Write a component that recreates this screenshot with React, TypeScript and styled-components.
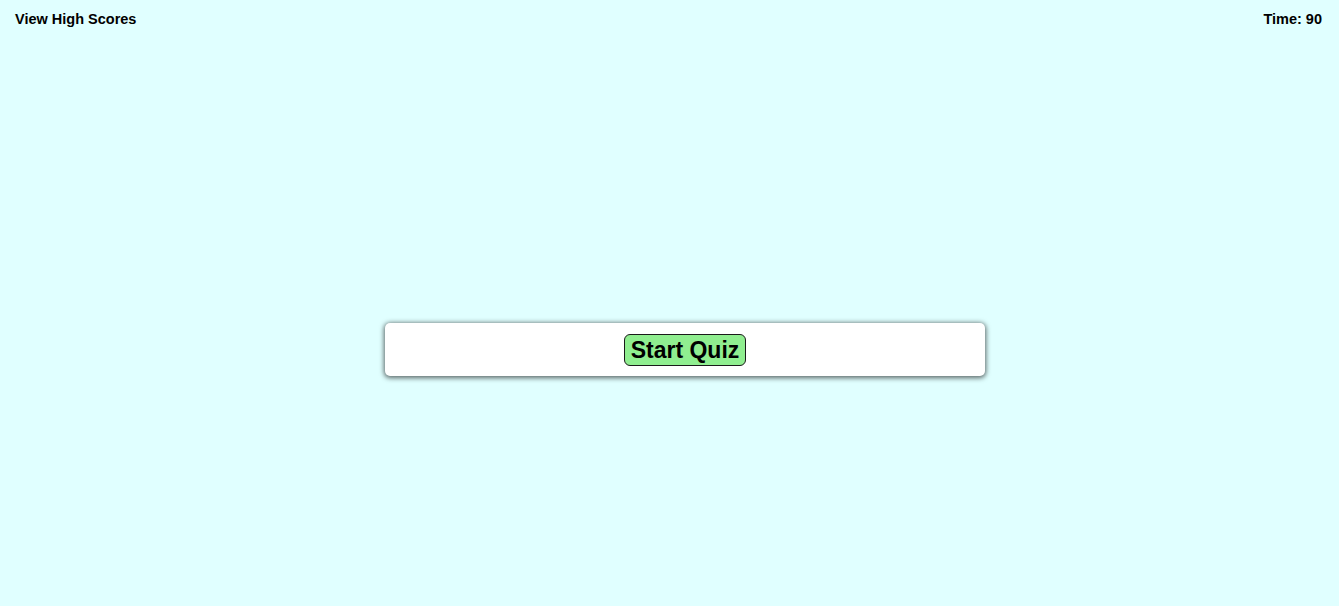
import React from "react";
import styled, { createGlobalStyle } from "styled-components";

const Global = createGlobalStyle`
  html, body { margin: 0; padding: 0; background: #ffffff; }
  body { font-family: "Liberation Sans", Arial, sans-serif; }
`;

const Page = styled.div`
  min-height: 606px;
  background: #e0ffff;
  display: flex;
  flex-direction: column;
`;

const Header = styled.header`
  display: flex;
  justify-content: space-between;
  align-items: flex-start;
  padding: 9px 17px 0 15px;
`;

const HeaderText = styled.span`
  font-size: 14.5px;
  font-weight: 700;
  color: #000;
  line-height: 20px;
`;

const Main = styled.main`
  display: flex;
  justify-content: center;
  padding: 294px 0 0 31px;
`;

const Card = styled.section`
  width: 600px;
  box-sizing: border-box;
  background: #ffffff;
  border-radius: 5px;
  box-shadow: 0 1px 5px 1px rgba(0, 0, 0, 0.6);
  padding: 11px 0 10px;
  display: flex;
  justify-content: center;
`;

const StartButton = styled.button`
  height: 32px;
  box-sizing: border-box;
  padding: 0 6px;
  background: #90ee90;
  border: 1px solid #1a1a1a;
  border-radius: 6px;
  font-family: "Liberation Sans", Arial, sans-serif;
  font-size: 23px;
  font-weight: 700;
  color: #000;
  line-height: 30px;
  cursor: pointer;
`;

export default function App() {
  return (
    <>
      <Global />
      <Page>
        <Header>
          <HeaderText>View High Scores</HeaderText>
          <HeaderText>Time: 90</HeaderText>
        </Header>
        <Main>
          <Card>
            <StartButton>Start Quiz</StartButton>
          </Card>
        </Main>
      </Page>
    </>
  );
}
